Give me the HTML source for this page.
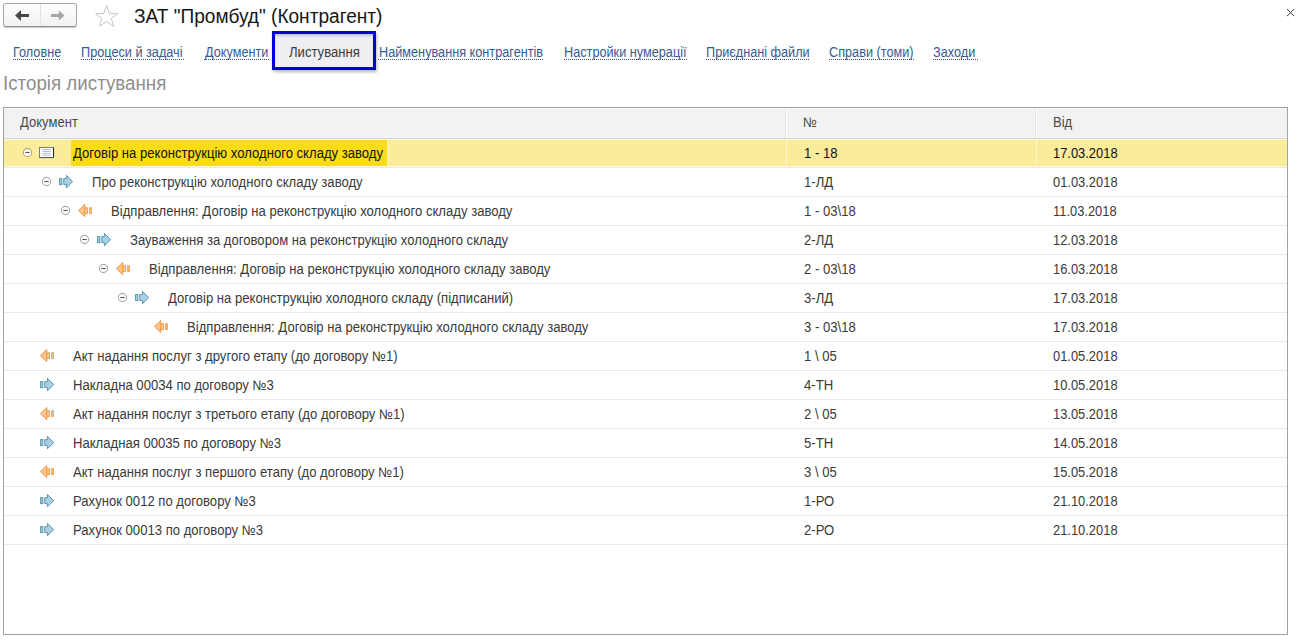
<!DOCTYPE html>
<html><head><meta charset="utf-8">
<style>
*{margin:0;padding:0;box-sizing:border-box}
html,body{width:1302px;height:642px;overflow:hidden;background:#fff}
body{position:relative;font-family:"Liberation Sans",sans-serif;color:#333}
.a{position:absolute;white-space:nowrap}
.nav{left:3px;top:3px;width:74px;height:24px;border:1px solid #a8a8a8;border-bottom-color:#8f8f8f;border-radius:3px;background:linear-gradient(#fefefe,#f1f1f1);box-shadow:0 1px 1px rgba(0,0,0,.2)}
.ul{height:1px;background:repeating-linear-gradient(90deg,#3c4c6c 0 1px,transparent 1px 2px)}
.tab{left:272px;top:31px;width:104px;height:39px;border:3px solid #0202d4;background:#efeef1;box-shadow:1px 2px 3px rgba(0,0,0,.28), inset 0 3px 3px -1px rgba(0,0,0,.18)}
.tbl{left:3px;top:107px;width:1285px;height:528px;border:1px solid #a3a3a3}
.hdr{left:4px;top:108px;width:1283px;height:31px;background:#f2f2f2;border-bottom:1px solid #d6d6d6}
.vd{width:1px;background:#fff}
.rl{left:4px;width:1283px;height:1px;background:#eaeaea}
</style></head><body>
<div class="a nav"><div class="a" style="left:36px;top:0;width:1px;height:22px;background:#e2e2e2"></div><svg class="a" style="left:-1px;top:-1px" width="76" height="26" viewBox="3 3 76 26"><path d="M15 15.5 L21 10 L21 14 L29 14 L29 17 L21 17 L21 21 Z" fill="#484848"/><path d="M64.5 15.5 L58.8 10.6 L58.8 14 L51 14 L51 17 L58.8 17 L58.8 20.6 Z" fill="#a6a6a6"/></svg></div>
<svg class="a" style="left:94px;top:4px" width="26" height="24" viewBox="0 0 26 24"><path d="M12.6 1.5 L15.4 9.4 L23.6 9.7 L17.3 14.5 L19.6 22.2 L12.6 17.6 L5.6 22.2 L7.9 14.5 L1.6 9.7 L9.8 9.4 Z" fill="none" stroke="#c6c6c6" stroke-width="1"/></svg>
<div class="a" style="left:134px;top:6px;font-size:19.4px;line-height:20px;color:#161616;transform:scaleX(0.9845);transform-origin:0 0;">ЗАТ "Промбуд" (Контрагент)</div>
<svg class="a" style="left:1286px;top:8px" width="10" height="10" viewBox="0 0 10 10"><path d="M1 1 L8.2 8.2 M8.2 1 L1 8.2" stroke="#3a3a3a" stroke-width="0.95"/></svg>
<div class="a" style="left:13px;top:43px;font-size:13.8px;line-height:20px;color:#385a90;transform:scaleX(0.9203);transform-origin:0 0">Головне</div>
<div class="a ul" style="left:13px;top:59px;width:48px"></div>
<div class="a" style="left:81px;top:43px;font-size:13.8px;line-height:20px;color:#385a90;transform:scaleX(0.9203);transform-origin:0 0">Процеси й задачі</div>
<div class="a ul" style="left:81px;top:59px;width:104px"></div>
<div class="a" style="left:204.5px;top:43px;font-size:13.8px;line-height:20px;color:#385a90;transform:scaleX(0.9203);transform-origin:0 0">Документи</div>
<div class="a ul" style="left:204px;top:59px;width:65px"></div>
<div class="a" style="left:378.5px;top:43px;font-size:13.8px;line-height:20px;color:#385a90;transform:scaleX(0.9203);transform-origin:0 0">Найменування контрагентів</div>
<div class="a ul" style="left:378px;top:59px;width:166px"></div>
<div class="a" style="left:563.5px;top:43px;font-size:13.8px;line-height:20px;color:#385a90;transform:scaleX(0.9203);transform-origin:0 0">Настройки нумерації</div>
<div class="a ul" style="left:564px;top:59px;width:124px"></div>
<div class="a" style="left:706px;top:43px;font-size:13.8px;line-height:20px;color:#385a90;transform:scaleX(0.9203);transform-origin:0 0">Приєднані файли</div>
<div class="a ul" style="left:706px;top:59px;width:104px"></div>
<div class="a" style="left:829px;top:43px;font-size:13.8px;line-height:20px;color:#385a90;transform:scaleX(0.9203);transform-origin:0 0">Справи (томи)</div>
<div class="a ul" style="left:829px;top:59px;width:85px"></div>
<div class="a" style="left:933px;top:43px;font-size:13.8px;line-height:20px;color:#385a90;transform:scaleX(0.9203);transform-origin:0 0">Заходи</div>
<div class="a ul" style="left:933px;top:59px;width:45px"></div>
<div class="a tab"></div>
<div class="a" style="left:288.5px;top:43px;font-size:13.8px;line-height:20px;color:#3a3a3a;transform:scaleX(0.9493);transform-origin:0 0;">Листування</div>
<div class="a" style="left:3px;top:73px;font-size:19.5px;line-height:20px;color:#8e8e8e;transform:scaleX(0.9615);transform-origin:0 0;">Історія листування</div>
<div class="a tbl"></div><div class="a hdr"></div>
<div class="a" style="left:4px;top:108px;width:1283px;height:1px;background:#f8f8f8"></div>
<div class="a vd" style="left:785px;top:108px;height:30px;background:#e3e3e3"></div><div class="a vd" style="left:786px;top:108px;height:30px"></div><div class="a vd" style="left:1035px;top:108px;height:30px;background:#e3e3e3"></div><div class="a vd" style="left:1036px;top:108px;height:30px"></div>
<div class="a" style="left:19.5px;top:113px;font-size:13.8px;line-height:20px;color:#4a4a4a;transform:scaleX(0.9457);transform-origin:0 0;">Документ</div>
<div class="a" style="left:803px;top:113px;font-size:13.8px;line-height:20px;color:#4a4a4a;transform:scaleX(0.9457);transform-origin:0 0;">№</div>
<div class="a" style="left:1053px;top:113px;font-size:13.8px;line-height:20px;color:#4a4a4a;transform:scaleX(0.9457);transform-origin:0 0;">Від</div>
<div class="a" style="left:4px;top:139px;width:1283px;height:28px;background:#fdf8dc"></div>
<div class="a" style="left:4px;top:140px;width:1283px;height:26px;background:#fbec9c"></div>
<div class="a vd" style="left:786px;top:140px;height:26px;background:#fdf6cf"></div>
<div class="a vd" style="left:1036px;top:140px;height:26px;background:#fdf6cf"></div>
<div class="a" style="left:387px;top:140px;width:2px;height:26px;background:#fdf39c"></div>
<div class="a" style="left:71px;top:140px;width:316px;height:26px;background:#fadb18"></div>
<div class="a rl" style="top:167px"></div>
<svg class="a" style="left:22px;top:147px" width="11" height="11" viewBox="0 0 11 11"><circle cx="5.5" cy="5.5" r="4.1" fill="#fff" stroke="#b6aa6a" stroke-width="1.1"/><path d="M3.3 5.5 H7.7" stroke="#555" stroke-width="1.1"/></svg>
<svg class="a" style="left:39px;top:147px" width="16" height="12" viewBox="0 0 16 12"><rect x="0.5" y="0.5" width="14" height="10" fill="#fff" stroke="#77745e" stroke-width="0.9"/><path d="M14.5 0.6 V10.5" stroke="#2c2c22" stroke-width="1.1"/><path d="M0.5 10.6 H14.6" stroke="#49584a" stroke-width="1"/><path d="M3.3 2.5 H11.8 M3.3 4.5 H11.8 M3.3 6.4 H11.8 M3.3 8.3 H11.8" stroke="#9ba4bb" stroke-width="0.75"/></svg>
<div class="a" style="left:72.5px;top:144px;font-size:13.8px;line-height:20px;color:#111;transform:scaleX(0.9493);transform-origin:0 0;">Договір на реконструкцію холодного складу заводу</div>
<div class="a" style="left:803.5px;top:144px;font-size:13.8px;line-height:20px;color:#111;transform:scaleX(0.9493);transform-origin:0 0;">1 - 18</div>
<div class="a" style="left:1053px;top:144px;font-size:13.8px;line-height:20px;color:#111;transform:scaleX(0.9348);transform-origin:0 0;">17.03.2018</div>
<div class="a rl" style="top:196px"></div>
<svg class="a" style="left:41px;top:176px" width="11" height="11" viewBox="0 0 11 11"><circle cx="5.5" cy="5.5" r="4.1" fill="#fff" stroke="#acacac" stroke-width="1.1"/><path d="M3.3 5.5 H7.7" stroke="#555" stroke-width="1.1"/></svg>
<svg class="a" style="left:58px;top:174px" width="16" height="16" viewBox="0 0 16 16"><rect x="1.6" y="4.6" width="2.2" height="6" fill="#a3d5da" stroke="#5c95b2" stroke-width="1"/><path d="M5.8 4.6 H8.4 V1.3 L14.6 7.6 L8.4 13.9 V10.6 H5.8 Z" fill="#a9d0e2" stroke="#5c95b2" stroke-width="1" stroke-linejoin="miter"/></svg>
<div class="a" style="left:91.5px;top:173px;font-size:13.8px;line-height:20px;color:#3a3a3a;transform:scaleX(0.9493);transform-origin:0 0;">Про реконструкцію холодного складу заводу</div>
<div class="a" style="left:803.5px;top:173px;font-size:13.8px;line-height:20px;color:#3a3a3a;transform:scaleX(0.9493);transform-origin:0 0;">1-ЛД</div>
<div class="a" style="left:1053px;top:173px;font-size:13.8px;line-height:20px;color:#3a3a3a;transform:scaleX(0.9348);transform-origin:0 0;">01.03.2018</div>
<div class="a rl" style="top:225px"></div>
<svg class="a" style="left:60px;top:205px" width="11" height="11" viewBox="0 0 11 11"><circle cx="5.5" cy="5.5" r="4.1" fill="#fff" stroke="#acacac" stroke-width="1.1"/><path d="M3.3 5.5 H7.7" stroke="#555" stroke-width="1.1"/></svg>
<svg class="a" style="left:77px;top:203px" width="16" height="16" viewBox="0 0 16 16"><path d="M7.8 1.5 L1.4 7.6 L7.8 13.7 Z" fill="#fcc590" stroke="#f09a48" stroke-width="1" stroke-linejoin="miter"/><rect x="7.8" y="4.8" width="2.6" height="5.6" fill="#fdcf98" stroke="#f09a48" stroke-width="1"/><rect x="12.7" y="4.8" width="1.6" height="5.6" fill="#fdd39e" stroke="#f09a48" stroke-width="1"/></svg>
<div class="a" style="left:110.5px;top:202px;font-size:13.8px;line-height:20px;color:#3a3a3a;transform:scaleX(0.9493);transform-origin:0 0;">Відправлення: Договір на реконструкцію холодного складу заводу</div>
<div class="a" style="left:803.5px;top:202px;font-size:13.8px;line-height:20px;color:#3a3a3a;transform:scaleX(0.9493);transform-origin:0 0;">1 - 03\18</div>
<div class="a" style="left:1053px;top:202px;font-size:13.8px;line-height:20px;color:#3a3a3a;transform:scaleX(0.9348);transform-origin:0 0;">11.03.2018</div>
<div class="a rl" style="top:254px"></div>
<svg class="a" style="left:79px;top:234px" width="11" height="11" viewBox="0 0 11 11"><circle cx="5.5" cy="5.5" r="4.1" fill="#fff" stroke="#acacac" stroke-width="1.1"/><path d="M3.3 5.5 H7.7" stroke="#555" stroke-width="1.1"/></svg>
<svg class="a" style="left:96px;top:232px" width="16" height="16" viewBox="0 0 16 16"><rect x="1.6" y="4.6" width="2.2" height="6" fill="#a3d5da" stroke="#5c95b2" stroke-width="1"/><path d="M5.8 4.6 H8.4 V1.3 L14.6 7.6 L8.4 13.9 V10.6 H5.8 Z" fill="#a9d0e2" stroke="#5c95b2" stroke-width="1" stroke-linejoin="miter"/></svg>
<div class="a" style="left:129.5px;top:231px;font-size:13.8px;line-height:20px;color:#3a3a3a;transform:scaleX(0.9493);transform-origin:0 0;">Зауваження за договором на реконструкцію холодного складу</div>
<div class="a" style="left:803.5px;top:231px;font-size:13.8px;line-height:20px;color:#3a3a3a;transform:scaleX(0.9493);transform-origin:0 0;">2-ЛД</div>
<div class="a" style="left:1053px;top:231px;font-size:13.8px;line-height:20px;color:#3a3a3a;transform:scaleX(0.9348);transform-origin:0 0;">12.03.2018</div>
<div class="a rl" style="top:283px"></div>
<svg class="a" style="left:98px;top:263px" width="11" height="11" viewBox="0 0 11 11"><circle cx="5.5" cy="5.5" r="4.1" fill="#fff" stroke="#acacac" stroke-width="1.1"/><path d="M3.3 5.5 H7.7" stroke="#555" stroke-width="1.1"/></svg>
<svg class="a" style="left:115px;top:261px" width="16" height="16" viewBox="0 0 16 16"><path d="M7.8 1.5 L1.4 7.6 L7.8 13.7 Z" fill="#fcc590" stroke="#f09a48" stroke-width="1" stroke-linejoin="miter"/><rect x="7.8" y="4.8" width="2.6" height="5.6" fill="#fdcf98" stroke="#f09a48" stroke-width="1"/><rect x="12.7" y="4.8" width="1.6" height="5.6" fill="#fdd39e" stroke="#f09a48" stroke-width="1"/></svg>
<div class="a" style="left:148.5px;top:260px;font-size:13.8px;line-height:20px;color:#3a3a3a;transform:scaleX(0.9493);transform-origin:0 0;">Відправлення: Договір на реконструкцію холодного складу заводу</div>
<div class="a" style="left:803.5px;top:260px;font-size:13.8px;line-height:20px;color:#3a3a3a;transform:scaleX(0.9493);transform-origin:0 0;">2 - 03\18</div>
<div class="a" style="left:1053px;top:260px;font-size:13.8px;line-height:20px;color:#3a3a3a;transform:scaleX(0.9348);transform-origin:0 0;">16.03.2018</div>
<div class="a rl" style="top:312px"></div>
<svg class="a" style="left:117px;top:292px" width="11" height="11" viewBox="0 0 11 11"><circle cx="5.5" cy="5.5" r="4.1" fill="#fff" stroke="#acacac" stroke-width="1.1"/><path d="M3.3 5.5 H7.7" stroke="#555" stroke-width="1.1"/></svg>
<svg class="a" style="left:134px;top:290px" width="16" height="16" viewBox="0 0 16 16"><rect x="1.6" y="4.6" width="2.2" height="6" fill="#a3d5da" stroke="#5c95b2" stroke-width="1"/><path d="M5.8 4.6 H8.4 V1.3 L14.6 7.6 L8.4 13.9 V10.6 H5.8 Z" fill="#a9d0e2" stroke="#5c95b2" stroke-width="1" stroke-linejoin="miter"/></svg>
<div class="a" style="left:167.5px;top:289px;font-size:13.8px;line-height:20px;color:#3a3a3a;transform:scaleX(0.9493);transform-origin:0 0;">Договір на реконструкцію холодного складу (підписаний)</div>
<div class="a" style="left:803.5px;top:289px;font-size:13.8px;line-height:20px;color:#3a3a3a;transform:scaleX(0.9493);transform-origin:0 0;">3-ЛД</div>
<div class="a" style="left:1053px;top:289px;font-size:13.8px;line-height:20px;color:#3a3a3a;transform:scaleX(0.9348);transform-origin:0 0;">17.03.2018</div>
<div class="a rl" style="top:341px"></div>
<svg class="a" style="left:153px;top:319px" width="16" height="16" viewBox="0 0 16 16"><path d="M7.8 1.5 L1.4 7.6 L7.8 13.7 Z" fill="#fcc590" stroke="#f09a48" stroke-width="1" stroke-linejoin="miter"/><rect x="7.8" y="4.8" width="2.6" height="5.6" fill="#fdcf98" stroke="#f09a48" stroke-width="1"/><rect x="12.7" y="4.8" width="1.6" height="5.6" fill="#fdd39e" stroke="#f09a48" stroke-width="1"/></svg>
<div class="a" style="left:186.5px;top:318px;font-size:13.8px;line-height:20px;color:#3a3a3a;transform:scaleX(0.9493);transform-origin:0 0;">Відправлення: Договір на реконструкцію холодного складу заводу</div>
<div class="a" style="left:803.5px;top:318px;font-size:13.8px;line-height:20px;color:#3a3a3a;transform:scaleX(0.9493);transform-origin:0 0;">3 - 03\18</div>
<div class="a" style="left:1053px;top:318px;font-size:13.8px;line-height:20px;color:#3a3a3a;transform:scaleX(0.9348);transform-origin:0 0;">17.03.2018</div>
<div class="a rl" style="top:370px"></div>
<svg class="a" style="left:39px;top:348px" width="16" height="16" viewBox="0 0 16 16"><path d="M7.8 1.5 L1.4 7.6 L7.8 13.7 Z" fill="#fcc590" stroke="#f09a48" stroke-width="1" stroke-linejoin="miter"/><rect x="7.8" y="4.8" width="2.6" height="5.6" fill="#fdcf98" stroke="#f09a48" stroke-width="1"/><rect x="12.7" y="4.8" width="1.6" height="5.6" fill="#fdd39e" stroke="#f09a48" stroke-width="1"/></svg>
<div class="a" style="left:72.5px;top:347px;font-size:13.8px;line-height:20px;color:#3a3a3a;transform:scaleX(0.9493);transform-origin:0 0;">Акт надання послуг з другого етапу (до договору №1)</div>
<div class="a" style="left:803.5px;top:347px;font-size:13.8px;line-height:20px;color:#3a3a3a;transform:scaleX(0.9493);transform-origin:0 0;">1 \ 05</div>
<div class="a" style="left:1053px;top:347px;font-size:13.8px;line-height:20px;color:#3a3a3a;transform:scaleX(0.9348);transform-origin:0 0;">01.05.2018</div>
<div class="a rl" style="top:399px"></div>
<svg class="a" style="left:39px;top:377px" width="16" height="16" viewBox="0 0 16 16"><rect x="1.6" y="4.6" width="2.2" height="6" fill="#a3d5da" stroke="#5c95b2" stroke-width="1"/><path d="M5.8 4.6 H8.4 V1.3 L14.6 7.6 L8.4 13.9 V10.6 H5.8 Z" fill="#a9d0e2" stroke="#5c95b2" stroke-width="1" stroke-linejoin="miter"/></svg>
<div class="a" style="left:72.5px;top:376px;font-size:13.8px;line-height:20px;color:#3a3a3a;transform:scaleX(0.9493);transform-origin:0 0;">Накладна 00034 по договору №3</div>
<div class="a" style="left:803.5px;top:376px;font-size:13.8px;line-height:20px;color:#3a3a3a;transform:scaleX(0.9493);transform-origin:0 0;">4-ТН</div>
<div class="a" style="left:1053px;top:376px;font-size:13.8px;line-height:20px;color:#3a3a3a;transform:scaleX(0.9348);transform-origin:0 0;">10.05.2018</div>
<div class="a rl" style="top:428px"></div>
<svg class="a" style="left:39px;top:406px" width="16" height="16" viewBox="0 0 16 16"><path d="M7.8 1.5 L1.4 7.6 L7.8 13.7 Z" fill="#fcc590" stroke="#f09a48" stroke-width="1" stroke-linejoin="miter"/><rect x="7.8" y="4.8" width="2.6" height="5.6" fill="#fdcf98" stroke="#f09a48" stroke-width="1"/><rect x="12.7" y="4.8" width="1.6" height="5.6" fill="#fdd39e" stroke="#f09a48" stroke-width="1"/></svg>
<div class="a" style="left:72.5px;top:405px;font-size:13.8px;line-height:20px;color:#3a3a3a;transform:scaleX(0.9493);transform-origin:0 0;">Акт надання послуг з третього етапу (до договору №1)</div>
<div class="a" style="left:803.5px;top:405px;font-size:13.8px;line-height:20px;color:#3a3a3a;transform:scaleX(0.9493);transform-origin:0 0;">2 \ 05</div>
<div class="a" style="left:1053px;top:405px;font-size:13.8px;line-height:20px;color:#3a3a3a;transform:scaleX(0.9348);transform-origin:0 0;">13.05.2018</div>
<div class="a rl" style="top:457px"></div>
<svg class="a" style="left:39px;top:435px" width="16" height="16" viewBox="0 0 16 16"><rect x="1.6" y="4.6" width="2.2" height="6" fill="#a3d5da" stroke="#5c95b2" stroke-width="1"/><path d="M5.8 4.6 H8.4 V1.3 L14.6 7.6 L8.4 13.9 V10.6 H5.8 Z" fill="#a9d0e2" stroke="#5c95b2" stroke-width="1" stroke-linejoin="miter"/></svg>
<div class="a" style="left:72.5px;top:434px;font-size:13.8px;line-height:20px;color:#3a3a3a;transform:scaleX(0.9493);transform-origin:0 0;">Накладная 00035 по договору №3</div>
<div class="a" style="left:803.5px;top:434px;font-size:13.8px;line-height:20px;color:#3a3a3a;transform:scaleX(0.9493);transform-origin:0 0;">5-ТН</div>
<div class="a" style="left:1053px;top:434px;font-size:13.8px;line-height:20px;color:#3a3a3a;transform:scaleX(0.9348);transform-origin:0 0;">14.05.2018</div>
<div class="a rl" style="top:486px"></div>
<svg class="a" style="left:39px;top:464px" width="16" height="16" viewBox="0 0 16 16"><path d="M7.8 1.5 L1.4 7.6 L7.8 13.7 Z" fill="#fcc590" stroke="#f09a48" stroke-width="1" stroke-linejoin="miter"/><rect x="7.8" y="4.8" width="2.6" height="5.6" fill="#fdcf98" stroke="#f09a48" stroke-width="1"/><rect x="12.7" y="4.8" width="1.6" height="5.6" fill="#fdd39e" stroke="#f09a48" stroke-width="1"/></svg>
<div class="a" style="left:72.5px;top:463px;font-size:13.8px;line-height:20px;color:#3a3a3a;transform:scaleX(0.9493);transform-origin:0 0;">Акт надання послуг з першого етапу (до договору №1)</div>
<div class="a" style="left:803.5px;top:463px;font-size:13.8px;line-height:20px;color:#3a3a3a;transform:scaleX(0.9493);transform-origin:0 0;">3 \ 05</div>
<div class="a" style="left:1053px;top:463px;font-size:13.8px;line-height:20px;color:#3a3a3a;transform:scaleX(0.9348);transform-origin:0 0;">15.05.2018</div>
<div class="a rl" style="top:515px"></div>
<svg class="a" style="left:39px;top:493px" width="16" height="16" viewBox="0 0 16 16"><rect x="1.6" y="4.6" width="2.2" height="6" fill="#a3d5da" stroke="#5c95b2" stroke-width="1"/><path d="M5.8 4.6 H8.4 V1.3 L14.6 7.6 L8.4 13.9 V10.6 H5.8 Z" fill="#a9d0e2" stroke="#5c95b2" stroke-width="1" stroke-linejoin="miter"/></svg>
<div class="a" style="left:72.5px;top:492px;font-size:13.8px;line-height:20px;color:#3a3a3a;transform:scaleX(0.9493);transform-origin:0 0;">Рахунок 0012 по договору №3</div>
<div class="a" style="left:803.5px;top:492px;font-size:13.8px;line-height:20px;color:#3a3a3a;transform:scaleX(0.9493);transform-origin:0 0;">1-РО</div>
<div class="a" style="left:1053px;top:492px;font-size:13.8px;line-height:20px;color:#3a3a3a;transform:scaleX(0.9348);transform-origin:0 0;">21.10.2018</div>
<div class="a rl" style="top:544px"></div>
<svg class="a" style="left:39px;top:522px" width="16" height="16" viewBox="0 0 16 16"><rect x="1.6" y="4.6" width="2.2" height="6" fill="#a3d5da" stroke="#5c95b2" stroke-width="1"/><path d="M5.8 4.6 H8.4 V1.3 L14.6 7.6 L8.4 13.9 V10.6 H5.8 Z" fill="#a9d0e2" stroke="#5c95b2" stroke-width="1" stroke-linejoin="miter"/></svg>
<div class="a" style="left:72.5px;top:521px;font-size:13.8px;line-height:20px;color:#3a3a3a;transform:scaleX(0.9493);transform-origin:0 0;">Рахунок 00013 по договору №3</div>
<div class="a" style="left:803.5px;top:521px;font-size:13.8px;line-height:20px;color:#3a3a3a;transform:scaleX(0.9493);transform-origin:0 0;">2-РО</div>
<div class="a" style="left:1053px;top:521px;font-size:13.8px;line-height:20px;color:#3a3a3a;transform:scaleX(0.9348);transform-origin:0 0;">21.10.2018</div>
</body></html>
